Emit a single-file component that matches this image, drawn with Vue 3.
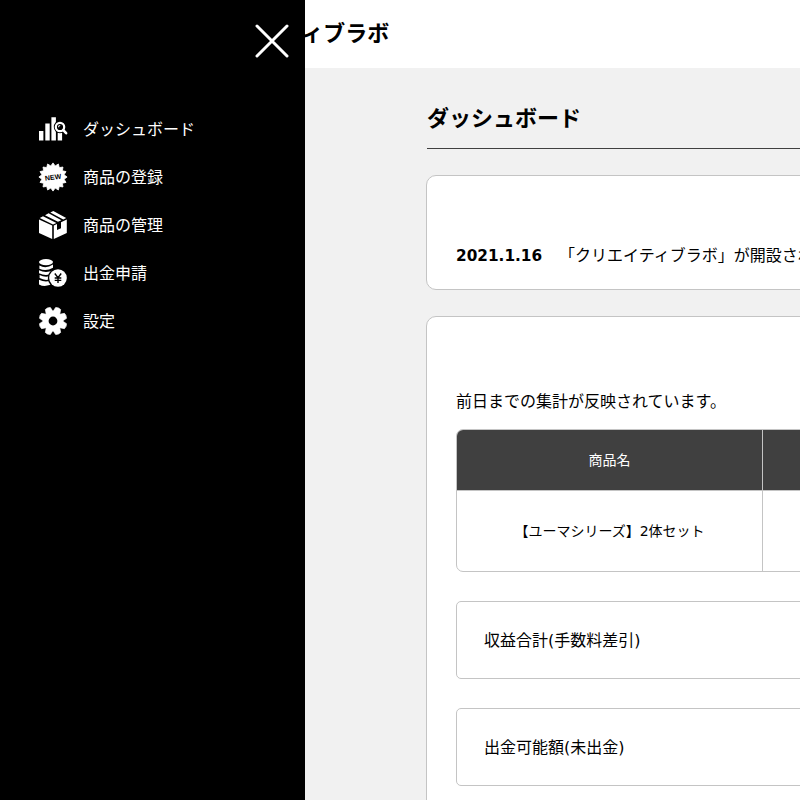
<template>
  <div class="page">
    <header class="header">
      <h1 class="site-name">クリエイティブラボ</h1>
    </header>

    <main class="main">
      <h2 class="page-title">ダッシュボード</h2>

      <section class="card news">
        <p v-for="item in news" :key="item.date" class="news-item">
          <b class="news-date">{{ item.date }}</b>
          <span>{{ item.text }}</span>
        </p>
      </section>

      <section class="card report">
        <p class="note">前日までの集計が反映されています。</p>
        <div class="table">
          <div class="row head">
            <div class="cell">商品名</div>
            <div class="cell"></div>
          </div>
          <div v-for="product in products" :key="product" class="row">
            <div class="cell">{{ product }}</div>
            <div class="cell"></div>
          </div>
        </div>
        <div v-for="total in totals" :key="total" class="total">{{ total }}</div>
      </section>
    </main>

    <aside class="sidebar">
      <button class="close" type="button" aria-label="閉じる">
        <svg width="34" height="34" viewBox="0 0 34 34">
          <path d="M2 2L32 32M32 2L2 32" stroke="#fff" stroke-width="3" stroke-linecap="round" />
        </svg>
      </button>
      <nav class="menu">
        <a v-for="item in menu" :key="item.icon" class="menu-item">
          <svg class="icon" viewBox="0 0 28 28" fill="#fff">
            <g v-if="item.icon === 'chart'">
              <path d="M0 16h4.4v9.6H0zM6.3 8.4h4.4v17.2H6.3zM12.4 2.3h4.5v23.3h-4.5zM18.7 17.5h4.4v8.1h-4.4z" />
              <circle cx="21" cy="12" r="6.2" fill="#000" />
              <path d="M24.3 15.2l3 3.3" stroke="#000" stroke-width="4" />
              <circle cx="21" cy="12" r="4.2" fill="#000" stroke="#fff" stroke-width="2.2" />
              <path d="M24.3 15.2l2.8 3" stroke="#fff" stroke-width="2.6" stroke-linecap="round" />
              <path d="M19.5 12.2a1.7 1.7 0 0 1 1.7-1.7" fill="none" stroke="#fff" stroke-width="1.1" />
            </g>
            <g v-else-if="item.icon === 'new'">
              <polygon :points="burst" stroke="#fff" stroke-width=".8" stroke-linejoin="round" />
              <text x="14" y="16.7" class="new-label" transform="rotate(-8 14 14)">NEW</text>
            </g>
            <g v-else-if="item.icon === 'box'">
              <path d="M0 8.6L13.2 14.6V28L0 22.1zM14.8 14.6L18 13.1V19l4-1.8v-5.9l5.8-2.7v13.5L14.8 28z" />
              <path d="M.8 6.9L4 5.2 17.4 12 14 13.4zM6 4.2L9.6 2.3 22.4 9.2 19 10.8zM11.3 1.4L14.3 0 27.2 7.1 24.3 8.4z" />
            </g>
            <g v-else-if="item.icon === 'coins'">
              <ellipse cx="7" cy="3.1" rx="7" ry="3.1" />
              <path d="M.4 6.6q6.6 3.6 13.6-1v3.1q-7 4.2-13.6 1zM0 11.2q7 3.6 14 0v3.1q-7 3.6-14 0zM.6 16q6.4 3.6 13.4 0v3.1q-7 3.6-13.4 0zM0 20.8q7 3.6 14 0v3.1q-7 5.4-14 1.6z" />
              <circle cx="19" cy="19" r="10.2" fill="#000" />
              <circle cx="19" cy="19" r="8.8" />
              <path d="M15.8 14.5L19 18.7l3.2-4.2M19 18.7V24M15.7 19h6.6M15.7 21.4h6.6" fill="none" stroke="#000" stroke-width="1.4" />
            </g>
            <g v-else>
              <path v-for="n in 4" :key="n" :transform="`rotate(${n * 45 + 22.5} 14 14)`" d="M10.4 5L11.3 .5Q14 -.8 16.7 .5L17.6 5V23L16.7 27.5Q14 28.8 11.3 27.5L10.4 23z" stroke="#fff" stroke-width=".6" stroke-linejoin="round" />
              <circle cx="14" cy="14" r="10" />
              <circle cx="14" cy="14" r="4.4" fill="#000" />
            </g>
          </svg>
          <span class="menu-label">{{ item.label }}</span>
        </a>
      </nav>
    </aside>
  </div>
</template>

<script setup>
const menu = [
  { icon: 'chart', label: 'ダッシュボード' },
  { icon: 'new', label: '商品の登録' },
  { icon: 'box', label: '商品の管理' },
  { icon: 'coins', label: '出金申請' },
  { icon: 'gear', label: '設定' }
]

const news = [{ date: '2021.1.16', text: '「クリエイティブラボ」が開設され' }]
const products = ['【ユーマシリーズ】2体セット']
const totals = ['収益合計(手数料差引)', '出金可能額(未出金)']

// 16-pointed badge outline
const burst = Array.from({ length: 32 }, (_, i) => {
  const radius = i % 2 ? 11.3 : 14.1
  const angle = (i * Math.PI) / 16
  return `${14 + radius * Math.sin(angle)},${14 - radius * Math.cos(angle)}`
}).join(' ')
</script>

<style>
body {
  margin: 0;
  background: #f1f1f1;
  overflow: hidden;
}
</style>

<style scoped>
.page {
  height: 100vh;
  overflow: hidden;
  color: #000;
  font-family: 'DejaVu Sans', 'Noto Sans CJK JP', sans-serif;
  font-size: 16px;
  font-weight: 400;
  line-height: 24px;
}

h1,
h2,
p {
  margin: 0;
}

.header {
  box-sizing: border-box;
  height: 68px;
  padding: 17px 0 0 193px;
  background: #fff;
}

.site-name,
.page-title {
  font-size: 22px;
  font-weight: 700;
  line-height: 33px;
}

.main {
  width: 900px;
  padding: 34px 0 0 426px;
}

.page-title {
  height: 46px;
  margin-left: 1px;
  border-bottom: 1px solid #404040;
}

.card {
  box-sizing: border-box;
  margin-top: 26px;
  padding: 0 29px;
  background: #fff;
  border: 1px solid #c4c4c4;
  border-radius: 10px;
}

.news {
  height: 115px;
  padding-top: 68px;
}

.news-item {
  display: flex;
  gap: 17px;
  white-space: nowrap;
}

.news-date {
  width: 86px;
  font-size: 15.3px;
  font-weight: 700;
}

.report {
  height: 560px;
  padding-top: 73px;
}

.table {
  margin-top: 15px;
  border: 1px solid #c4c4c4;
  border-radius: 7px;
  overflow: hidden;
  font-size: 14px;
}

.row {
  display: grid;
  grid-template-columns: 305px 1fr;
  height: 80px;
}

.row.head {
  height: 60px;
  background: #404040;
  border-bottom: 1px solid #c4c4c4;
  color: #fff;
}

.cell {
  display: flex;
  align-items: center;
  justify-content: center;
}

.cell + .cell {
  border-left: 1px solid #c4c4c4;
}

.total {
  display: flex;
  align-items: center;
  height: 74px;
  margin-top: 29px;
  padding: 2px 0 0 27px;
  border: 1px solid #c4c4c4;
  border-radius: 5px;
}

.sidebar {
  position: fixed;
  top: 0;
  left: 0;
  bottom: 0;
  box-sizing: border-box;
  width: 305px;
  padding: 24px 16px 0 39px;
  background: #000;
  color: #fff;
}

.close {
  display: block;
  width: 34px;
  height: 34px;
  margin-left: auto;
  padding: 0;
  border: 0;
  background: none;
}

.menu {
  display: grid;
  gap: 20px;
  margin-top: 57px;
}

.menu-item {
  display: flex;
  align-items: center;
  gap: 16px;
  height: 28px;
}

.menu-label {
  padding-top: 2px;
}

.icon {
  width: 28px;
  height: 28px;
  overflow: visible;
}

.new-label {
  fill: #000;
  font-family: 'Liberation Sans', sans-serif;
  font-size: 7px;
  font-weight: 700;
  text-anchor: middle;
}
</style>
